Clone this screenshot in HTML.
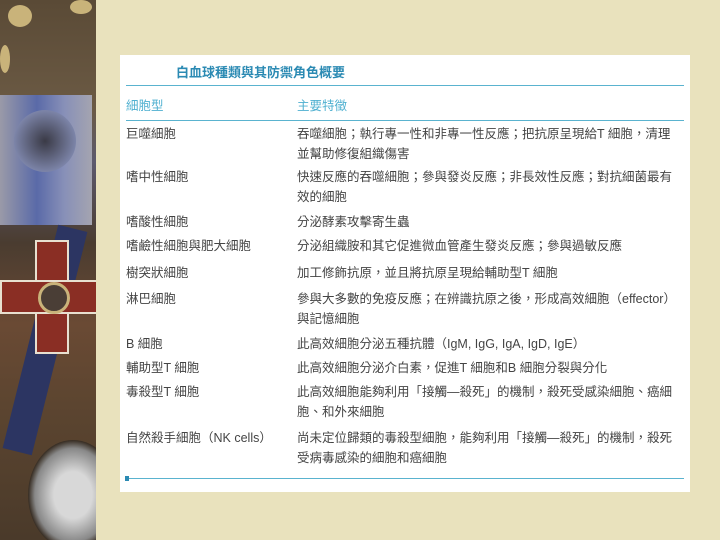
<!DOCTYPE html>
<html><head><meta charset="utf-8"><style>
body{margin:0;width:720px;height:540px;background:#e9e2bd;position:relative;overflow:hidden;font-family:"Liberation Sans","Noto Sans CJK TC",sans-serif}
#img{position:absolute;left:0;top:0;width:96px;height:540px;overflow:hidden;background:linear-gradient(180deg,#5a4a36 0%,#6b5a44 20%,#5d5a6e 30%,#4a3c30 45%,#6a4a34 60%,#5c4530 75%,#4a3a2a 100%)}
#panel{position:absolute;left:120px;top:55px;width:570px;height:437px;background:#fff}
.t{position:absolute;font-size:12.5px;color:#444;white-space:nowrap;line-height:20px}
.hl{position:absolute;left:126px;width:558px;height:1px;background:#5ab3cf}
</style></head><body>
<div id="img">
<div style="position:absolute;left:8px;top:5px;width:24px;height:22px;border-radius:50%;background:#c9b37a"></div>
<div style="position:absolute;left:70px;top:0;width:22px;height:14px;border-radius:50%;background:#c9b37a"></div>
<div style="position:absolute;left:0;top:45px;width:10px;height:28px;border-radius:50%;background:#c9b37a"></div>
<div style="position:absolute;left:0;top:95px;width:92px;height:130px;background:linear-gradient(90deg,#9a9aa8,#5a6aa8 40%,#8890b8 70%,#a4a4b0)"></div>
<div style="position:absolute;left:14px;top:110px;width:62px;height:62px;border-radius:50%;background:radial-gradient(#3a3a46,#7c84a8 70%,#555a78)"></div>
<div style="position:absolute;left:30px;top:225px;width:30px;height:230px;background:#2c3562;transform:rotate(14deg)"></div>
<div style="position:absolute;left:35px;top:240px;width:30px;height:110px;background:#8a2e24;border:2px solid #e8e0d0"></div>
<div style="position:absolute;left:0;top:280px;width:96px;height:30px;background:#8a2e24;border:2px solid #e8e0d0"></div>
<div style="position:absolute;left:38px;top:282px;width:26px;height:26px;border-radius:50%;background:#4a3e36;border:3px solid #c9b37a"></div>
<div style="position:absolute;left:28px;top:440px;width:90px;height:110px;border-radius:50%;background:radial-gradient(#d8d8d8 30%,#888 60%,#3a3026 70%)"></div>
</div>
<div id="panel"></div>
<div class="t" style="left:176px;top:63px;color:#2b8ab3;font-weight:bold;font-size:13px">白血球種類與其防禦角色概要</div>
<div class="hl" style="top:85px"></div>
<div class="t" style="left:126px;top:96px;color:#4fb0d0">細胞型</div>
<div class="t" style="left:297px;top:96px;color:#4fb0d0">主要特徵</div>
<div class="hl" style="top:120px"></div>
<div class="t" style="left:126px;top:124px">巨噬細胞</div>
<div class="t" style="left:297px;top:124px">吞噬細胞；執行專一性和非專一性反應；把抗原呈現給T 細胞，清理<br>並幫助修復組織傷害</div>
<div class="t" style="left:126px;top:167px">嗜中性細胞</div>
<div class="t" style="left:297px;top:167px">快速反應的吞噬細胞；參與發炎反應；非長效性反應；對抗細菌最有<br>效的細胞</div>
<div class="t" style="left:126px;top:212px">嗜酸性細胞</div>
<div class="t" style="left:297px;top:212px">分泌酵素攻擊寄生蟲</div>
<div class="t" style="left:126px;top:236px">嗜鹼性細胞與肥大細胞</div>
<div class="t" style="left:297px;top:236px">分泌組織胺和其它促進微血管產生發炎反應；參與過敏反應</div>
<div class="t" style="left:126px;top:263px">樹突狀細胞</div>
<div class="t" style="left:297px;top:263px">加工修飾抗原，並且將抗原呈現給輔助型T 細胞</div>
<div class="t" style="left:126px;top:289px">淋巴細胞</div>
<div class="t" style="left:297px;top:289px">參與大多數的免疫反應；在辨識抗原之後，形成高效細胞（effector）<br>與記憶細胞</div>
<div class="t" style="left:126px;top:334px">B 細胞</div>
<div class="t" style="left:297px;top:334px">此高效細胞分泌五種抗體（IgM, IgG, IgA, IgD, IgE）</div>
<div class="t" style="left:126px;top:358px">輔助型T 細胞</div>
<div class="t" style="left:297px;top:358px">此高效細胞分泌介白素，促進T 細胞和B 細胞分裂與分化</div>
<div class="t" style="left:126px;top:382px">毒殺型T 細胞</div>
<div class="t" style="left:297px;top:382px">此高效細胞能夠利用「接觸—殺死」的機制，殺死受感染細胞、癌細<br>胞、和外來細胞</div>
<div class="t" style="left:126px;top:428px">自然殺手細胞（NK cells）</div>
<div class="t" style="left:297px;top:428px">尚未定位歸類的毒殺型細胞，能夠利用「接觸—殺死」的機制，殺死<br>受病毒感染的細胞和癌細胞</div>
<div class="hl" style="top:478px;left:126px"></div>
<div style="position:absolute;left:125px;top:476px;width:4px;height:5px;background:#2b8ab3"></div>
</body></html>
